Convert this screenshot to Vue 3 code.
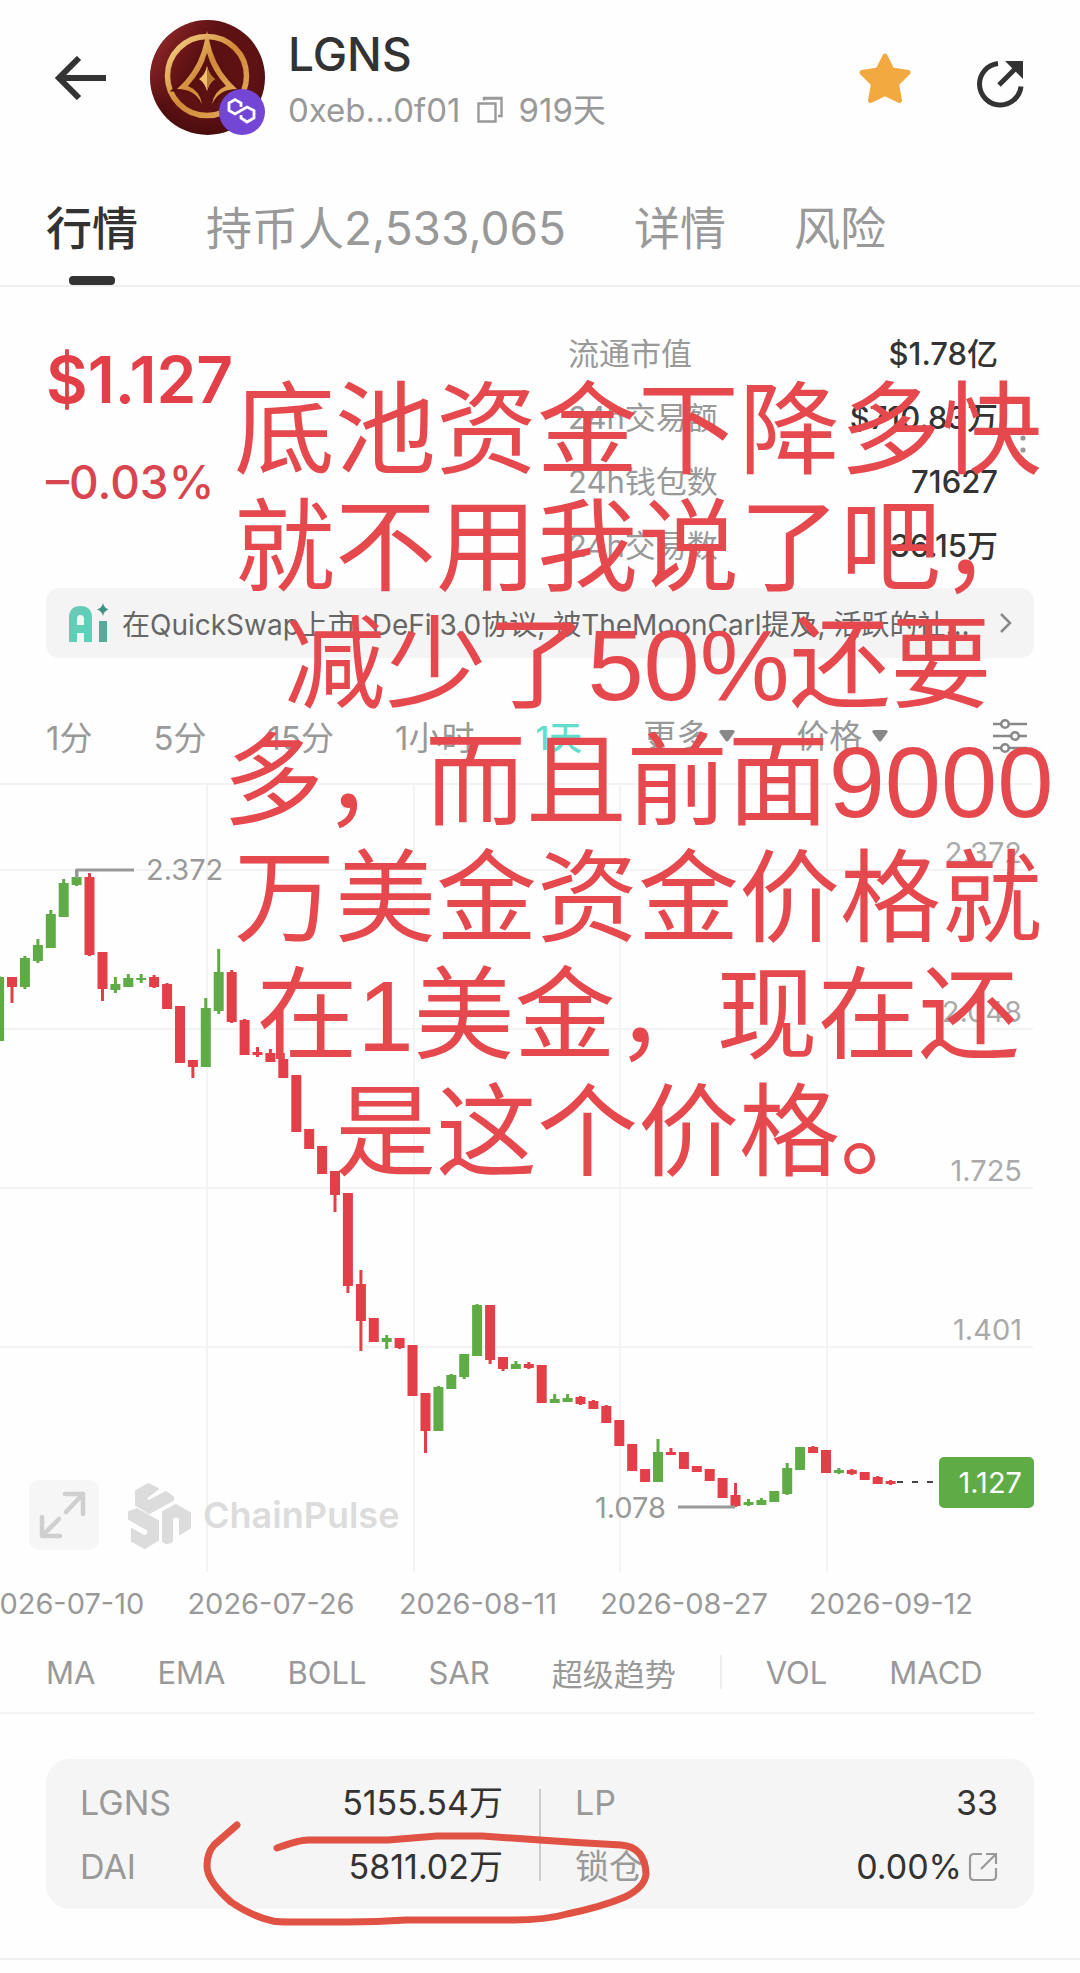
<script setup>
import { ref } from 'vue'

const tabs = ['行情', '持币人2,533,065', '详情', '风险']
const activeTab = ref(0)

const stats = [
  { label: '流通市值', value: '$1.78亿' },
  { label: '24h交易额', value: '$710.83万' },
  { label: '24h钱包数', value: '71627' },
  { label: '24h交易数', value: '36.15万' },
]

const intervals = ['1分', '5分', '15分', '1小时', '1天']
const activeInterval = ref(4)

const mainIndicators = ['MA', 'EMA', 'BOLL', 'SAR', '超级趋势']
const subIndicators = ['VOL', 'MACD']

const noteLines = [
  '底池资金下降多快',
  '就不用我说了吧，',
  '减少了50%还要',
  '多，而且前面9000',
  '万美金资金价格就',
  '在1美金，现在还',
  '是这个价格。',
]

const gridRows = [8, 94, 253, 412, 571]
const gridColumns = [207, 414, 620, 827]
const priceLabels = [
  { text: '2.372', y: 87 },
  { text: '2.048', y: 246 },
  { text: '1.725', y: 405 },
  { text: '1.401', y: 564 },
]
const dateLabels = [
  { text: '2026-07-10', x: 63 },
  { text: '2026-07-26', x: 271 },
  { text: '2026-08-11', x: 478 },
  { text: '2026-08-27', x: 684 },
  { text: '2026-09-12', x: 891 },
]

// One row per day: direction, high, body top, body bottom, low (chart units).
const days = [
  ['up', 200, 201, 265, 265], ['down', 201, 201, 211, 227], ['up', 180, 182, 211, 213],
  ['up', 163, 169, 185, 187], ['up', 134, 138, 172, 172], ['up', 103, 107, 141, 141],
  ['up', 94, 101, 109, 110], ['down', 97, 101, 179, 180], ['down', 176, 176, 213, 225],
  ['up', 201, 208, 214, 217], ['up', 198, 202, 211, 211], ['up', 198, 202, 204, 207],
  ['down', 199, 201, 211, 212], ['down', 207, 208, 233, 233], ['down', 230, 230, 287, 287],
  ['down', 284, 284, 291, 302], ['up', 222, 232, 291, 291], ['up', 173, 196, 235, 238],
  ['down', 194, 196, 246, 247], ['down', 243, 244, 279, 279], ['down', 271, 276, 279, 281],
  ['down', 273, 277, 286, 286], ['down', 277, 283, 302, 302], ['down', 299, 299, 356, 356],
  ['down', 353, 353, 373, 373], ['down', 370, 370, 398, 398], ['down', 395, 395, 419, 436],
  ['down', 417, 417, 510, 517], ['down', 494, 508, 545, 575], ['down', 542, 542, 566, 566],
  ['up', 559, 562, 566, 573], ['down', 562, 562, 572, 573], ['down', 569, 569, 620, 620],
  ['down', 617, 617, 655, 677], ['up', 610, 611, 655, 655], ['up', 598, 599, 613, 613],
  ['up', 578, 578, 601, 603], ['up', 528, 529, 580, 580], ['down', 529, 529, 584, 588],
  ['down', 581, 581, 593, 595], ['up', 585, 588, 593, 593], ['down', 586, 588, 592, 593],
  ['down', 589, 589, 627, 627], ['up', 618, 623, 627, 627], ['up', 618, 622, 626, 626],
  ['down', 620, 621, 628, 629], ['down', 624, 625, 633, 633], ['down', 629, 630, 647, 647],
  ['down', 644, 644, 670, 670], ['down', 668, 668, 695, 695], ['down', 693, 693, 706, 706],
  ['up', 663, 676, 706, 706], ['down', 672, 676, 679, 679], ['down', 676, 676, 693, 693],
  ['down', 690, 690, 696, 696], ['down', 693, 693, 705, 705], ['down', 702, 702, 722, 722],
  ['down', 707, 719, 730, 731], ['up', 723, 726, 729, 730], ['up', 722, 724, 729, 729],
  ['up', 715, 715, 726, 726], ['up', 687, 692, 718, 719], ['up', 671, 671, 694, 694],
  ['down', 670, 671, 677, 677], ['down', 674, 674, 697, 697], ['up', 692, 694, 697, 698],
  ['down', 693, 694, 698, 699], ['down', 696, 696, 704, 704], ['down', 700, 701, 708, 708],
  ['down', 704, 705, 708, 709],
]
const step = 12.92
const candles = days.map(([dir, high, top, bottom, low], i) => ({
  dir, high, top, bottom, low, x: Math.round((i * step - 0.9) * 10) / 10,
}))
</script>

<template>
  <main class="page">
    <header class="header">
      <button class="icon-button" aria-label="返回">
        <svg width="52" height="44" viewBox="0 0 52 44" fill="none" stroke="#333" stroke-width="6">
          <path d="M51 22H5M24 2 4 22l20 20" />
        </svg>
      </button>
      <svg class="avatar" width="116" height="116" viewBox="0 0 116 116" aria-hidden="true">
        <defs>
          <radialGradient id="wine" cx="0.5" cy="0.4" r="0.6">
            <stop offset="0" stop-color="#5a1010" />
            <stop offset="0.7" stop-color="#5f1214" />
            <stop offset="1" stop-color="#4a0c0d" />
          </radialGradient>
          <linearGradient id="sheen" x1="0" y1="0.2" x2="0.6" y2="0.6">
            <stop offset="0" stop-color="#b03a3c" stop-opacity="0.7" />
            <stop offset="0.6" stop-color="#8a2022" stop-opacity="0" />
          </linearGradient>
          <linearGradient id="gold" x1="0" y1="0" x2="1" y2="1">
            <stop offset="0" stop-color="#f6d38a" />
            <stop offset="0.5" stop-color="#d08a38" />
            <stop offset="1" stop-color="#e6ad5c" />
          </linearGradient>
        </defs>
        <circle cx="57.5" cy="57.5" r="57.5" fill="url(#wine)" />
        <circle cx="57.5" cy="57.5" r="57.5" fill="url(#sheen)" />
        <circle cx="57" cy="56" r="39.5" fill="none" stroke="url(#gold)" stroke-width="5.5" />
        <path d="M57 22Q50 50 29 68Q46 68 51 82M57 22Q64 50 85 68Q68 68 63 82" fill="#5a1010" stroke="#5a1010" stroke-width="7" />
        <path d="M57 11Q60 24 62 31Q69 53 87 69Q69 69 62 84Q64 71 76 66Q62 51 57 33Q52 51 38 66Q50 71 52 84Q45 69 27 69Q45 53 52 31Q54 24 57 11z" fill="url(#gold)" />
        <path d="M57 46q2 9 8 13q-6 4-8 12q-2-8-8-12q6-4 8-13z" fill="#f0c070" />
        <path d="M57 46q2 9 8 13q-6 4-8 12z" fill="#b8772f" />
        <circle cx="92" cy="92" r="23" fill="#7446d6" />
        <path d="M91 87v-4l-6-3.500-6 3.500v7.500l6 3.500 12-7 7 3.500v7.500l-7 4-6-4v-3" fill="none" stroke="#fff" stroke-width="2.8" />
      </svg>
      <div class="identity">
        <h1>LGNS</h1>
        <div class="address">
          <span>0xeb...0f01</span>
          <button class="icon-button" aria-label="复制地址">
            <svg width="26" height="28" viewBox="0 0 26 28" fill="none" stroke="#999" stroke-width="2.4">
              <path d="M1.500 7.500h17v18h-17zM7 4.500V2h17.500v18H21M8 2.500h16" />
            </svg>
          </button>
          <span>919天</span>
        </div>
      </div>
      <button class="icon-button" aria-label="收藏">
        <svg width="54" height="52" viewBox="0 0 54 52">
          <path d="M27 4l7 14 16 2.500-11.500 11.500 3 16.500-14.500-7-14.500 7 3-16.500L4 20.500l16-2.500z" fill="#f2a93f" stroke="#f2a93f" stroke-width="5" stroke-linejoin="round" />
        </svg>
      </button>
      <button class="icon-button share" aria-label="分享">
        <svg width="48" height="48" viewBox="0 0 48 48" fill="none" stroke="#333" stroke-width="5">
          <path d="M22 3.500A20.800 20.800 0 1 0 45 26.500" />
          <path d="M23 25 42 6" />
          <path d="M29 1h18v18z" fill="#333" stroke="none" />
        </svg>
      </button>
    </header>

    <nav class="tabs">
      <button v-for="(tab, i) in tabs" :key="tab" :class="{ active: i === activeTab }" @click="activeTab = i">{{ tab }}</button>
    </nav>

    <section class="summary">
      <div>
        <p class="price">$1.127</p>
        <p class="change">–0.03%</p>
      </div>
      <dl class="stats">
        <div v-for="stat in stats" :key="stat.label">
          <dt>{{ stat.label }}</dt>
          <dd>{{ stat.value }}</dd>
        </div>
      </dl>
      <button class="icon-button more" aria-label="更多数据">
        <svg width="6" height="30" viewBox="0 0 6 30" fill="#999">
          <circle cx="3" cy="3" r="2.600" /><circle cx="3" cy="15" r="2.600" /><circle cx="3" cy="27" r="2.600" />
        </svg>
      </button>
    </section>

    <a class="insight" href="#insight">
      <svg width="40" height="40" viewBox="0 0 40 40" aria-hidden="true">
        <defs>
          <linearGradient id="mint" x1="0" y1="0" x2="1" y2="1">
            <stop offset="0" stop-color="#6cc9b4" />
            <stop offset="1" stop-color="#56d3bb" />
          </linearGradient>
        </defs>
        <path d="M1 39V15Q1 3 12.500 3T24 15V39H16V30H9V39zM9 22h7V16q0-4-3.500-4T9 16z" fill="url(#mint)" fill-rule="evenodd" />
        <path d="M31 18h8v21h-8z" fill="#56ab98" />
        <path d="M35 0q1 5 6 6.500q-5 1.500-6 6.500q-1-5-6-6.500q5-1.500 6-6.500z" fill="#3f9382" />
      </svg>
      <span>在QuickSwap上市, DeFi 3.0协议, 被TheMoonCarl提及, 活跃的社...</span>
      <svg width="12" height="22" viewBox="0 0 12 22" fill="none" stroke="#888" stroke-width="2.500" aria-hidden="true">
        <path d="M1 2l9 9-9 9" />
      </svg>
    </a>

    <div class="intervals">
      <button v-for="(item, i) in intervals" :key="item" :class="{ active: i === activeInterval }" @click="activeInterval = i">{{ item }}</button>
      <label class="picker">
        <select aria-label="更多周期"><option>更多</option></select>
        <svg width="16" height="12" viewBox="0 0 16 12" fill="#888"><path d="M2 0h12q3 1 1 3l-5 7q-2 3-4 0L1 3Q-1 1 2 0z" /></svg>
      </label>
      <label class="picker">
        <select aria-label="数据类型"><option>价格</option></select>
        <svg width="16" height="12" viewBox="0 0 16 12" fill="#888"><path d="M2 0h12q3 1 1 3l-5 7q-2 3-4 0L1 3Q-1 1 2 0z" /></svg>
      </label>
      <button class="icon-button settings" aria-label="图表设置">
        <svg width="36" height="36" viewBox="0 0 36 36" fill="none" stroke="#888" stroke-width="2.600">
          <path d="M1 6h8M17 6h18M1 18h18M27 18h8M1 30h8M17 30h18" />
          <circle cx="13" cy="6" r="3.800" /><circle cx="23" cy="18" r="3.800" /><circle cx="13" cy="30" r="3.800" />
        </svg>
      </button>
    </div>

    <section class="chart">
      <svg class="plot" viewBox="0 0 1080 860" role="img" aria-label="LGNS 日线价格">
        <g class="grid">
          <path v-for="y in gridRows" :key="'r' + y" :d="`M0 ${y}H1033`" />
          <path v-for="x in gridColumns" :key="'c' + x" :d="`M${x} 8V796`" />
        </g>
        <g class="axis">
          <text v-for="label in priceLabels" :key="label.text" x="1022" :y="label.y" text-anchor="end">{{ label.text }}</text>
        </g>
        <g v-for="c in candles" :key="c.x" :class="c.dir">
          <rect :x="c.x - 1.5" :y="c.high" width="3" :height="c.low - c.high" />
          <rect :x="c.x - 5" :y="c.top" width="10" :height="c.bottom - c.top" />
        </g>
        <g class="extremes">
          <path d="M77 102V94H134M678 731H735" />
          <text x="146" y="104">2.372</text>
          <text x="666" y="742" text-anchor="end">1.078</text>
        </g>
        <path d="M897 706H937" stroke="#444" stroke-width="2" stroke-dasharray="6 9" />
        <rect x="939" y="681" width="95" height="51" rx="5" fill="#5fac47" />
        <text class="current" x="1022" y="717" text-anchor="end">1.127</text>
        <g class="dates">
          <text v-for="label in dateLabels" :key="label.text" :x="label.x" y="838" text-anchor="middle">{{ label.text }}</text>
        </g>
      </svg>
      <div class="brand">
        <button class="icon-button expand" aria-label="全屏">
          <svg width="70" height="70" viewBox="0 0 70 70" fill="none" stroke="#cfcfcf" stroke-width="4.500" stroke-linecap="round" stroke-linejoin="round">
            <path d="M37 32 54 14M36 14h18v20M30 39 13 56M13 37v19h18" />
          </svg>
        </button>
        <svg width="64" height="68" viewBox="0 0 64 68" fill="#dcdcdc" stroke="#dcdcdc" stroke-width="2" stroke-linejoin="round" aria-hidden="true">
          <path d="M9 10 22 3l9 5-11 8q-1 4 2 4L39 11l7 5v3L22 32 9 24z" />
          <path d="M2 31l8-3 21 12v19L18 67 5 60V48l12 7q5 0 4-6L2 38z" />
          <path d="M36 31l13-7 14 8v15l-10 6V38q-4-5-8 0v22q-5 4-9 0z" />
        </svg>
        <span>ChainPulse</span>
      </div>
    </section>

    <div class="indicators">
      <button v-for="name in mainIndicators" :key="name">{{ name }}</button>
      <i class="rule"></i>
      <button v-for="name in subIndicators" :key="name">{{ name }}</button>
    </div>

    <section class="pool">
      <dl>
        <div><dt>LGNS</dt><dd>5155.54万</dd></div>
        <div><dt>DAI</dt><dd>5811.02万</dd></div>
      </dl>
      <i class="rule"></i>
      <dl>
        <div><dt>LP</dt><dd>33</dd></div>
        <div>
          <dt>锁仓</dt>
          <dd>
            0.00%
            <a class="open" href="#lock" aria-label="查看锁仓">
              <svg width="30" height="30" viewBox="0 0 30 30" fill="none" stroke="#999" stroke-width="2.200">
                <path d="M14 2H6Q2 2 2 6v18q0 4 4 4h18q4 0 4-4v-8M18 2h10v10M28 2 13 17" />
              </svg>
            </a>
          </dd>
        </div>
      </dl>
      <svg class="mark" width="450" height="110" viewBox="0 0 450 110" aria-hidden="true">
        <path d="M36 6 13 26Q6 34 6 47Q6 62 30 83Q50 97 72 102Q76 103 90 103H147Q175 103 205 101H312Q345 101 366 95Q400 88 424 78Q444 68 445 55Q444 28 420 26Q380 24 339 21L281 17H236L187 21H107Q98 21 76 29" />
      </svg>
    </section>

    <aside class="note">
      <p v-for="line in noteLines" :key="line">{{ line }}</p>
    </aside>
  </main>
</template>

<style>
body {
  background: #fefefe;
}
</style>

<style scoped>
.page {
  position: relative;
  overflow: hidden;
  padding-bottom: 12px;
  font-family: Inter, "Noto Sans CJK SC", sans-serif;
  color: #333;
}
button,
select {
  margin: 0;
  padding: 0;
  border: 0;
  background: none;
  font: inherit;
  color: inherit;
  white-space: nowrap;
  appearance: none;
}
svg {
  display: block;
  flex: none;
}
p,
h1,
dl,
dd {
  margin: 0;
}
.icon-button {
  flex: none;
}

.header {
  display: flex;
  align-items: center;
  padding: 20px 56px 19px 55px;
}
.avatar {
  margin: 0 22px 0 43px;
}
.identity {
  flex: 1;
  padding-top: 8px;
}
h1 {
  font-size: 46px;
  font-weight: 500;
  line-height: 52px;
}
.address {
  display: flex;
  align-items: center;
  gap: 16px;
  margin-top: 4px;
  font-size: 33px;
  line-height: 52px;
  color: #999;
}
.share {
  margin-left: 64px;
  padding-top: 12px;
}

.tabs {
  display: flex;
  gap: 68px;
  padding: 43px 46px 0;
  border-bottom: 2px solid #f0f0f0;
  font-size: 46px;
  line-height: 60px;
  color: #999;
}
.tabs button {
  position: relative;
  padding-bottom: 27px;
}
.tabs .active {
  font-weight: 500;
  color: #333;
}
.tabs .active::after {
  content: "";
  position: absolute;
  bottom: 0;
  left: 50%;
  width: 46px;
  height: 9px;
  margin-left: -23px;
  border-radius: 4px;
  background: #333;
}

.summary {
  display: flex;
  padding: 35px 54px 10px 46px;
}
.price {
  margin-top: 20px;
  font-size: 64px;
  font-weight: 600;
  line-height: 76px;
  color: #e33f49;
}
.change {
  margin-top: 36px;
  font-size: 46px;
  font-weight: 500;
  line-height: 56px;
  color: #d9454e;
}
.stats {
  width: 430px;
  margin-left: auto;
  font-size: 31px;
  line-height: 64px;
}
.stats div,
.pool dl div {
  display: flex;
  justify-content: space-between;
}
.stats dt {
  color: #999;
}
.stats dd {
  font-weight: 500;
}
.more {
  align-self: center;
  margin-left: 22px;
}

.insight {
  display: flex;
  align-items: center;
  height: 70px;
  margin: 0 46px;
  padding: 0 22px;
  border-radius: 14px;
  background: #f4f4f4;
  font-size: 28px;
  color: #666;
  text-decoration: none;
}
.insight span {
  flex: 1;
  margin: 0 14px;
  overflow: hidden;
  white-space: nowrap;
}

.intervals {
  display: flex;
  align-items: center;
  gap: 61px;
  height: 60px;
  margin-top: 48px;
  padding: 0 52px 0 46px;
  font-size: 33px;
  color: #999;
}
.intervals .active {
  font-weight: 500;
  color: #62dccb;
}
.picker {
  display: flex;
  align-items: center;
  gap: 10px;
}
.settings {
  margin-left: auto;
}

.chart {
  position: relative;
  margin-top: 10px;
}
.plot {
  width: 100%;
  font-size: 29px;
}
.grid {
  stroke: #f3f3f3;
  stroke-width: 2;
}
.axis {
  fill: #aaa;
}
.up {
  fill: #5fac47;
}
.down {
  fill: #e33f49;
}
.extremes path {
  fill: none;
  stroke: #999;
  stroke-width: 3;
}
.extremes,
.dates {
  fill: #999;
}
.current {
  fill: #fff;
}
.brand {
  position: absolute;
  bottom: 86px;
  left: 29px;
  display: flex;
  align-items: center;
  font-size: 36px;
  font-weight: 600;
  color: #dcdcdc;
}
.expand {
  margin-right: 28px;
  border-radius: 10px;
  background: #f6f6f6;
}
.brand span {
  margin-left: 12px;
}

.indicators {
  display: flex;
  align-items: center;
  gap: 62px;
  height: 78px;
  margin: 0 46px 45px 0;
  padding-left: 46px;
  padding-bottom: 4px;
  box-sizing: border-box;
  border-bottom: 2px solid #f3f3f3;
  font-size: 31px;
  color: #999;
}
.indicators .rule {
  width: 2px;
  height: 34px;
  margin: 0 -18px;
  background: #eee;
}

.pool {
  position: relative;
  display: flex;
  align-items: center;
  margin: 0 46px 49px;
  padding: 12px 36px 10px 34px;
  border-radius: 24px;
  background: #f5f5f5;
  font-size: 34px;
  line-height: 64px;
}
.pool::after {
  content: "";
  position: absolute;
  right: -46px;
  bottom: -51px;
  left: -46px;
  height: 2px;
  background: #f0f0f0;
}
.pool dl {
  flex: 1;
}
.pool dt {
  color: #999;
}
.pool dd {
  display: flex;
  align-items: center;
  gap: 6px;
}
.pool .rule {
  width: 2px;
  height: 92px;
  margin: 0 34px 0 36px;
  background: #ccc;
}
.mark {
  position: absolute;
  top: 60px;
  left: 155px;
  fill: none;
  stroke: #e05243;
  stroke-width: 7;
  stroke-linecap: round;
  stroke-linejoin: round;
}

.note {
  position: absolute;
  top: 373px;
  right: 20px;
  left: 216px;
  font-family: "Liberation Sans", "Noto Sans CJK SC", sans-serif;
  font-size: 101px;
  line-height: 117px;
  color: #e5484d;
  text-align: center;
  white-space: nowrap;
  pointer-events: none;
}
</style>
